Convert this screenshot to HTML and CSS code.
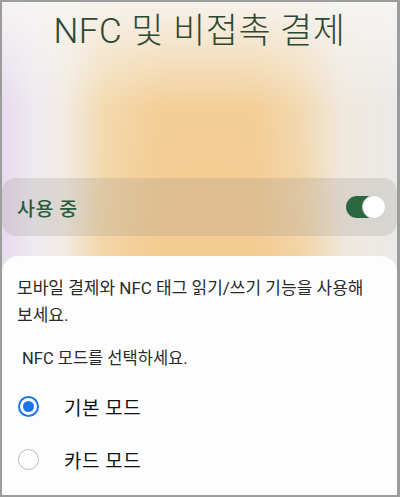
FILE: index.html
```html
<!DOCTYPE html>
<html lang="ko">
<head>
<meta charset="utf-8">
<link rel="stylesheet" href="styles.css">
</head>
<body>
<div class="screen">
  <div class="hero">
    <h1 class="title">NFC 및 비접촉 결제</h1>
    <div class="master">
      <span class="master-label">사용 중</span>
      <span class="switch"><span class="knob"></span></span>
    </div>
  </div>
  <div class="sheet">
    <p class="desc">모바일 결제와 NFC 태그 읽기/쓰기 기능을 사용해 보세요.</p>
    <p class="sub">NFC 모드를 선택하세요.</p>
    <div class="option">
      <span class="radio on"></span>
      <span class="opt-label">기본 모드</span>
    </div>
    <div class="option">
      <span class="radio"></span>
      <span class="opt-label">카드 모드</span>
    </div>
  </div>
</div>
</body>
</html>
```
FILE: styles.css
```css
* { box-sizing: border-box; }
html, body { margin: 0; padding: 0; }
body {
  font-family: Roboto, "Noto Sans CJK KR", sans-serif;
  background: #fff;
}
.screen {
  width: 400px;
  height: 497px;
  border: 2px solid #9c9c9c;
  border-right-width: 3px;
  display: flex;
  flex-direction: column;
  overflow: hidden;
  background:
    radial-gradient(ellipse 150px 260px at 52% 65%, rgba(243,200,140,0.8), rgba(243,200,140,0) 100%),
    linear-gradient(90deg, #e6daec 0%, #eeeaf0 8%, #f2ebe2 16%, #f3d9ae 26%, #f3cf98 40%, #f3cf98 64%, #f2d9b2 76%, #efe8de 86%, #ebeae8 100%);
}
.hero {
  height: 254px;
  display: flex;
  flex-direction: column;
  position: relative;
  background: linear-gradient(180deg, rgba(246,245,243,0.92) 0%, rgba(246,245,243,0.5) 20%, rgba(246,245,243,0) 42%);
}
.title {
  margin: 8px 0 0;
  text-align: center;
  font-weight: 300;
  font-size: 35px;
  line-height: 44px;
  color: #2d4833;
  letter-spacing: 0.5px;
}
.master {
  margin: 124px 0 0 0;
  height: 58px;
  border-radius: 14px;
  background: rgba(140,135,130,0.2);
  display: flex;
  align-items: center;
  justify-content: space-between;
  padding: 0 12px 0 15px;
}
.master-label {
  font-size: 19.5px;
  font-weight: 500;
  color: #2c5c3c;
  letter-spacing: 0.5px;
}
.switch {
  width: 39px;
  height: 22px;
  border-radius: 11px;
  background: #2d6741;
  position: relative;
}
.knob {
  position: absolute;
  right: -1px;
  top: -1px;
  width: 24px;
  height: 24px;
  border-radius: 50%;
  background: #fff;
  border: 1px solid #c8d0c8;
}
.sheet {
  flex: 1;
  background: #fdfdfd;
  border-radius: 16px 16px 0 0;
  padding: 19px 18px 0 15px;
}
.desc {
  margin: 0;
  font-size: 17px;
  line-height: 27px;
  color: #2a2a2a;
  word-break: keep-all;
}
.sub {
  margin: 16px 0 0 5px;
  font-size: 16.5px;
  line-height: 27px;
  color: #2a2a2a;
}
.option {
  display: flex;
  align-items: center;
  height: 53px;
}
.option:first-of-type { margin-top: 8px; }
.radio {
  width: 21px;
  height: 21px;
  border-radius: 50%;
  border: 1.5px solid #b7b7b7;
  margin-left: 1px;
  margin-right: 25px;
  flex: none;
  position: relative;
}
.radio.on {
  border: 2px solid #1a73e8;
}
.radio.on::after {
  content: "";
  position: absolute;
  left: 3px;
  top: 3px;
  width: 11px;
  height: 11px;
  border-radius: 50%;
  background: #1a73e8;
}
.opt-label {
  font-size: 19px;
  color: #111;
  letter-spacing: 0.5px;
}
```
